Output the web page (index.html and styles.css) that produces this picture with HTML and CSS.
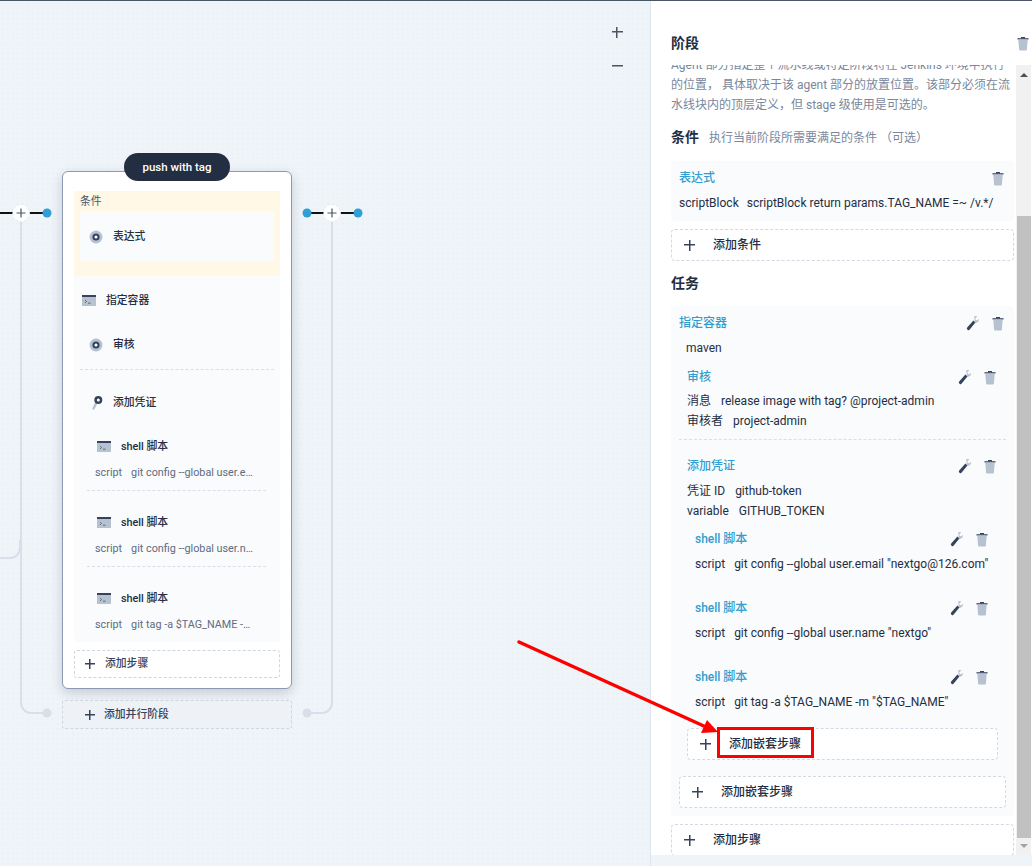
FILE: index.html
```html
<!DOCTYPE html>
<html lang="zh-CN">
	<head>
		<meta charset="utf-8">
		<title>编辑流水线</title>
		<link rel="stylesheet" href="styles.css">
	</head>
	<body>
		<svg class="defs" width="0" height="0">
			<symbol id="trash" viewBox="0 0 16 16">
				<path d="M2.5 3.2h11v1.3h-11z" fill="#36435c"/>
				<path d="M6 2h4v1.3H6z" fill="#36435c"/>
				<path d="M3.3 4.5h9.4l-.8 10a1 1 0 0 1-1 .9H5.1a1 1 0 0 1-1-.9z" fill="#b6c2cf"/>
			</symbol>
			<symbol id="wrench" viewBox="0 0 16 16">
				<path d="M10.2 1.4c1.1-.5 2.200-.4 3 0l-2 2 .6 1.600 1.700.3 1.400-1.600c.3 1.600-.3 3.200-2 3.800-.7.300-1.500.2-2 0z" fill="#b6c2cf"/>
				<path d="M9.400 5.600l2 2-5.700 7a1.500 1.500 0 0 1-2.200.1l-.2-.2a1.500 1.500 0 0 1 .1-2.200z" fill="#36435c"/>
			</symbol>
			<symbol id="target" viewBox="0 0 14 14">
				<circle cx="7" cy="7" r="6.500" fill="#b6c2cf"/>
				<circle cx="7" cy="7" r="3.600" fill="#36435c"/>
				<circle cx="7" cy="7" r="1.500" fill="#fff"/>
			</symbol>
			<symbol id="term" viewBox="0 0 14 12">
				<rect x="0" y="0" width="14" height="11" fill="#b6c2cf"/>
				<rect x="0" y="0" width="14" height="2" fill="#36435c"/>
				<path d="M3 5l1.500 1.500L3 8M6 8.200h2.500" fill="none" stroke="#36435c" stroke-width=".7"/>
			</symbol>
			<symbol id="key" viewBox="0 0 14 14">
				<path d="M7.500 6.500L4.500 12.500" stroke="#b6c2cf" stroke-width="2.400" stroke-linecap="round"/>
				<circle cx="9.300" cy="4" r="4" fill="#36435c"/>
				<circle cx="9.300" cy="4" r="1.500" fill="#fff"/>
			</symbol>
		</svg>

		<div class="app">
			<div class="canvas">
				<svg class="wires" width="651" height="866">
					<path d="M21 222V703a10 10 0 0 0 10 10H47" class="wire-grey"/>
					<path d="M332 222V703a10 10 0 0 1 -10 10H307" class="wire-grey"/>
					<path d="M0 558H10a10 10 0 0 0 10 -10V540" class="wire-grey"/>
					<path d="M0 213H46M307 213H358" class="wire-black"/>
					<circle cx="47" cy="713" r="4.500" fill="#d8dfe8"/>
					<circle cx="307" cy="713" r="4.500" fill="#d8dfe8"/>
					<circle cx="47" cy="213" r="4.500" fill="#2f9fd6"/>
					<circle cx="307" cy="213" r="4.500" fill="#2f9fd6"/>
					<circle cx="358" cy="213" r="4.500" fill="#2f9fd6"/>
					<g class="joint">
						<circle cx="21" cy="213" r="8.500"/>
						<circle cx="332" cy="213" r="8.500"/>
					</g>
					<path d="M16.500 213h9M21 208.500v9M327.500 213h9M332 208.500v9" class="joint-plus"/>
				</svg>

				<span class="zoom zoom-in"></span>
				<span class="zoom zoom-out"></span>

				<div class="node">
					<div class="node-name">push with tag</div>
					<div class="node-cond">
						<div class="node-cond-label">条件</div>
						<div class="node-cond-box">
							<svg class="ico"><use href="#target"/></svg>
							<b>表达式</b>
						</div>
					</div>
					<div class="node-steps">
						<div class="node-row node-row-top">
							<svg class="ico"><use href="#term"/></svg>
							<b>指定容器</b>
						</div>
						<div class="node-row node-row-in">
							<svg class="ico"><use href="#target"/></svg>
							<b>审核</b>
						</div>
						<div class="node-dash"></div>
						<div class="node-row node-row-in node-row-key">
							<svg class="ico"><use href="#key"/></svg>
							<b>添加凭证</b>
						</div>
						<div class="node-shell">
							<div class="node-shell-head">
								<svg class="ico-sm"><use href="#term"/></svg>
								<b>shell 脚本</b>
							</div>
							<div class="node-script"><span>script</span>git config --global user.email "nextgo@126.com"</div>
						</div>
						<div class="node-shell">
							<div class="node-shell-head">
								<svg class="ico-sm"><use href="#term"/></svg>
								<b>shell 脚本</b>
							</div>
							<div class="node-script"><span>script</span>git config --global user.name "nextgo"</div>
						</div>
						<div class="node-shell node-shell-last">
							<div class="node-shell-head">
								<svg class="ico-sm"><use href="#term"/></svg>
								<b>shell 脚本</b>
							</div>
							<div class="node-script"><span>script</span>git tag -a $TAG_NAME -m "$TAG_NAME"</div>
						</div>
					</div>
					<div class="node-add"><i class="plus"></i>添加步骤</div>
				</div>

				<div class="node-parallel"><i class="plus"></i>添加并行阶段</div>
			</div>

			<div class="panel">
				<div class="panel-head">
					<h3>阶段</h3>
					<svg class="btn-ico"><use href="#trash"/></svg>
				</div>
				<div class="panel-body">
					<div class="scroll">
						<p class="desc">Agent 部分指定整个流水线或特定阶段将在 Jenkins 环境中执行的位置， 具体取决于该 agent 部分的放置位置。该部分必须在流水线块内的顶层定义，但 stage 级使用是可选的。</p>

						<div class="sec-title">条件<small>执行当前阶段所需要满足的条件 （可选）</small></div>
						<div class="card">
							<div class="step-head">
								<span>表达式</span>
								<svg class="btn-ico"><use href="#trash"/></svg>
							</div>
							<div class="row row-first row-tight"><span>scriptBlock</span>scriptBlock return params.TAG_NAME =~ /v.*/</div>
						</div>
						<div class="add"><i class="plus"></i>添加条件</div>

						<div class="sec-title sec-task">任务</div>
						<div class="card">
							<div class="step-head">
								<span>指定容器</span>
								<svg class="btn-ico"><use href="#wrench"/></svg>
								<svg class="btn-ico"><use href="#trash"/></svg>
							</div>
							<div class="row row-first row-in">maven</div>

							<div class="sub sub-first">
								<div class="step-head">
									<span>审核</span>
									<svg class="btn-ico"><use href="#wrench"/></svg>
									<svg class="btn-ico"><use href="#trash"/></svg>
								</div>
								<div class="row row-first"><span>消息</span>release image with tag? @project-admin</div>
								<div class="row"><span>审核者</span>project-admin</div>
							</div>
							<div class="dash"></div>
							<div class="sub sub-after-dash">
								<div class="step-head">
									<span>添加凭证</span>
									<svg class="btn-ico"><use href="#wrench"/></svg>
									<svg class="btn-ico"><use href="#trash"/></svg>
								</div>
								<div class="row row-first row-six"><span>凭证 ID</span>github-token</div>
								<div class="row"><span>variable</span>GITHUB_TOKEN</div>

								<div class="sub sub-shell">
									<div class="step-head">
										<span>shell 脚本</span>
										<svg class="btn-ico"><use href="#wrench"/></svg>
										<svg class="btn-ico"><use href="#trash"/></svg>
									</div>
									<div class="row row-first"><span>script</span>git config --global user.email "nextgo@126.com"</div>
								</div>
								<div class="sub sub-shell sub-gap">
									<div class="step-head">
										<span>shell 脚本</span>
										<svg class="btn-ico"><use href="#wrench"/></svg>
										<svg class="btn-ico"><use href="#trash"/></svg>
									</div>
									<div class="row row-first"><span>script</span>git config --global user.name "nextgo"</div>
								</div>
								<div class="sub sub-shell sub-gap">
									<div class="step-head">
										<span>shell 脚本</span>
										<svg class="btn-ico"><use href="#wrench"/></svg>
										<svg class="btn-ico"><use href="#trash"/></svg>
									</div>
									<div class="row row-first"><span>script</span>git tag -a $TAG_NAME -m "$TAG_NAME"</div>
								</div>
								<div class="add add-nested"><i class="plus"></i>添加嵌套步骤</div>
							</div>
							<div class="add add-outer"><i class="plus"></i>添加嵌套步骤</div>
						</div>
						<div class="add"><i class="plus"></i>添加步骤</div>
					</div>
					<div class="scrollbar">
						<span class="arrow-up"></span>
						<span class="thumb"></span>
						<span class="arrow-down"></span>
					</div>
				</div>
			</div>
		</div>

		<!-- annotation drawn on top of the screenshot -->
		<svg class="note-arrow" width="1032" height="866">
			<path d="M519 642L706 727" stroke="#f00" stroke-width="3.500" stroke-linecap="round"/>
			<path d="M718 732L701 733L707 720z" fill="#f00"/>
		</svg>
		<div class="note-box"></div>
	</body>
</html>
```
FILE: styles.css
```css
* {
	box-sizing: border-box;
}
html, body {
	margin: 0;
	height: 100%;
}
body {
	font-family: Roboto, "Noto Sans CJK SC", sans-serif;
	font-size: 12px;
	line-height: 20px;
	color: #242e42;
	background: #eff4f9;
	overflow: hidden;
	position: relative;
}
.defs {
	position: absolute;
}
.app {
	display: flex;
	height: 866px;
	border-top: 1px solid #4a5568;
}

/* canvas */
.canvas {
	width: 651px;
	flex: none;
	position: relative;
	background-color: #eff4f9;
	background-image: radial-gradient(#ebf0f6 1px, transparent 1px);
	background-size: 5px 5px;
	border-right: 1px solid #dde5ee;
}
.wires {
	position: absolute;
	left: 0;
	top: -1px;
}
.wire-grey {
	fill: none;
	stroke: #d8dfe8;
	stroke-width: 2;
}
.wire-black {
	fill: none;
	stroke: #111;
	stroke-width: 2;
}
.joint circle {
	fill: #fff;
	stroke: #e4e9f0;
	stroke-width: 1;
	stroke-dasharray: 2 2;
}
.joint-plus {
	fill: none;
	stroke: #4a5568;
	stroke-width: 1.2;
}
.zoom {
	position: absolute;
	left: 611px;
	width: 12px;
	height: 12px;
}
.zoom-in {
	top: 25px;
	background: linear-gradient(#4a5568, #4a5568) center / 11px 1.5px no-repeat, linear-gradient(#4a5568, #4a5568) center / 1.5px 11px no-repeat;
}
.zoom-out {
	top: 59px;
	background: linear-gradient(#4a5568, #4a5568) center / 11px 1.5px no-repeat;
}
.node {
	position: absolute;
	left: 62px;
	top: 170px;
	width: 230px;
	height: 518px;
	padding: 19px 11px 11px;
	background: #fff;
	border: 1px solid #8d99b0;
	border-radius: 6px;
	box-shadow: 0 4px 12px rgba(36, 46, 66, .2);
	font-size: 10.800px;
}
.node b {
	font-weight: 500;
	color: #242e42;
}
.node-name {
	position: absolute;
	left: 61px;
	top: -19px;
	width: 106px;
	height: 28px;
	line-height: 28px;
	border-radius: 14px;
	background: #242e42;
	color: #fff;
	font-size: 11.500px;
	font-weight: 500;
	text-align: center;
}
.node-cond {
	height: 85px;
	padding: 0 6px;
	background: #fff8e6;
}
.node-cond-label {
	height: 20px;
	line-height: 22px;
	color: #4a5568;
}
.node-cond-box {
	display: flex;
	align-items: center;
	gap: 10px;
	height: 50px;
	padding: 1px 0 0 9px;
	background: #f9fbfd;
	border-radius: 3px;
}
.ico {
	width: 14px;
	height: 14px;
	flex: none;
}
.ico-sm {
	width: 14px;
	height: 12px;
	flex: none;
}
.node-steps {
	height: 366px;
	background: #f9fbfd;
	border-radius: 0 0 4px 4px;
}
.node-row {
	display: flex;
	align-items: center;
	gap: 10px;
}
.node-row-top {
	height: 50px;
	padding-left: 8px;
}
.node-row-in {
	height: 38px;
	padding-left: 15px;
}
.node-row-key {
	height: 40px;
	margin-top: 13px;
}
.node-dash {
	height: 1px;
	margin: 5px 6px 0;
	border-top: 1px dashed #d8dfe8;
}
.node-shell {
	margin: 8px 14px 16px 13px;
	padding-bottom: 7px;
	border-bottom: 1px dashed #d8dfe8;
}
.node-shell-last {
	border-bottom: 0;
	margin-bottom: 0;
}
.node-shell-head {
	display: flex;
	align-items: center;
	gap: 10px;
	height: 32px;
	padding-left: 10px;
}
.node-script {
	height: 20px;
	padding: 0 8px;
	color: #5f6b80;
	white-space: nowrap;
	overflow: hidden;
	text-overflow: ellipsis;
}
.node-script span {
	margin-right: 9px;
}
.node-add,
.node-parallel {
	display: flex;
	align-items: center;
	border: 1px dashed #cfd6e0;
	border-radius: 3px;
	color: #36435c;
	font-weight: 500;
}
.node-add {
	height: 28px;
	margin-top: 8px;
	padding-left: 10px;
	background: #fff;
}
.node-parallel {
	position: absolute;
	left: 62px;
	top: 699px;
	width: 230px;
	height: 29px;
	padding-left: 22px;
	font-size: 10.800px;
	background: #eef2f7;
}
.node-parallel .plus {
	margin-right: 9px;
}
.plus {
	position: relative;
	display: block;
	width: 10px;
	height: 10px;
	margin-right: 10px;
	flex: none;
	background: linear-gradient(#36435c, #36435c) center / 10px 1.500px no-repeat, linear-gradient(#36435c, #36435c) center / 1.500px 10px no-repeat;
}

/* side panel */
.panel {
	width: 381px;
	height: 854px;
	background: #fff;
	display: flex;
	flex-direction: column;
}
.panel-head {
	display: flex;
	align-items: center;
	justify-content: space-between;
	height: 64px;
	padding: 20px 1px 0 20px;
}
.panel-head h3 {
	margin: 0;
	font-size: 14px;
	font-weight: 700;
}
.btn-ico {
	width: 16px;
	height: 16px;
	flex: none;
}
.panel-body {
	flex: 1;
	display: flex;
	min-height: 0;
}
.scroll {
	width: 343px;
	margin-left: 20px;
	overflow: hidden;
}
/* scrolled a little: first line of the text is cut by the panel head */
.desc {
	margin: -10px 0 0;
	color: #79879c;
}
.sec-title {
	margin-top: 12px;
	font-size: 14px;
	font-weight: 700;
}
.sec-title small {
	margin-left: 10px;
	font-size: 12px;
	font-weight: 400;
	color: #79879c;
}
.card {
	margin-top: 13px;
	padding: 8px;
	background: #f9fbfd;
	border-radius: 4px;
}
.step-head {
	display: flex;
	align-items: center;
	gap: 10px;
	height: 18px;
	color: #329dce;
	font-weight: 500;
}
.step-head span {
	flex: 1;
}
.row {
	height: 20px;
	white-space: nowrap;
}
.row span {
	margin-right: 10px;
}
.row-tight span {
	margin-right: 8px;
}
.row-first {
	margin-top: 6px;
}
.row-in {
	padding-left: 7px;
}
.sub {
	margin: 9px 8px 0;
}
.sub-first {
	margin-top: 10px;
}
.sub > .step-head + .row-first {
	margin-top: 5px;
}
.sub > .step-head + .row-six,
.sub-shell > .step-head + .row-first {
	margin-top: 6px;
}
.sub-shell .row span {
	margin-right: 9px;
}
.sub-gap {
	margin-top: 25px;
}
.sub-after-dash {
	margin-top: 17px;
}
.dash {
	height: 1px;
	margin: 8px 0;
	border-top: 1px dashed #d8dfe8;
}
.add {
	display: flex;
	align-items: center;
	height: 32px;
	margin-top: 8px;
	padding-left: 12px;
	background: #fff;
	border: 1px dashed #d1d9e2;
	border-radius: 4px;
	font-weight: 500;
}
.add .plus {
	width: 11px;
	height: 11px;
	margin-right: 18px;
	background: linear-gradient(#36435c, #36435c) center / 11px 1.500px no-repeat, linear-gradient(#36435c, #36435c) center / 1.500px 11px no-repeat;
}
.add-nested {
	margin-top: 16px;
}
.add-outer {
	margin-top: 16px;
}
.scrollbar {
	width: 15px;
	margin-left: 2px;
	display: flex;
	flex-direction: column;
	align-items: center;
	background: #f1f1f1;
}
.thumb {
	width: 14px;
	height: 622px;
	background: #c1c1c1;
	margin-top: 139px;
}
.arrow-up {
	margin-top: 8px;
	border: 4px solid transparent;
	border-top: 0;
	border-bottom: 4px solid #505050;
}
.arrow-down {
	margin-top: 6px;
	border: 4px solid transparent;
	border-bottom: 0;
	border-top: 4px solid #a3a3a3;
}

/* annotation */
.note-arrow {
	position: absolute;
	left: 0;
	top: 0;
	pointer-events: none;
}
.note-box {
	position: absolute;
	left: 717px;
	top: 727px;
	width: 97px;
	height: 31px;
	border: 3px solid #f00;
}
```
